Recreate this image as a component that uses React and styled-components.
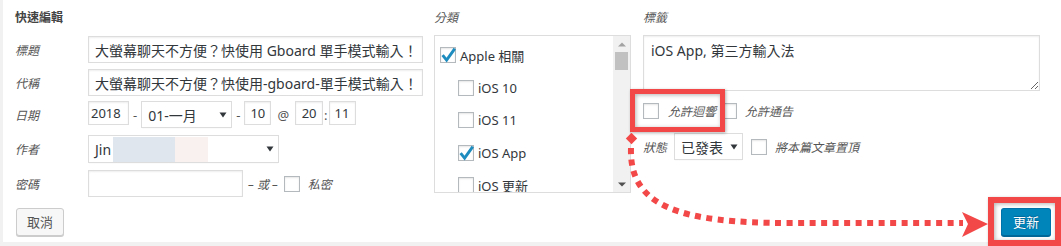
import React from "react";
import styled, { createGlobalStyle } from "styled-components";

const GlobalStyle = createGlobalStyle`
  html, body {
    margin: 0;
    padding: 0;
    background: #f1f1f1;
  }
  body {
    font-family: "Noto Sans", "Noto Sans CJK TC", sans-serif;
    color: #32373c;
  }
`;

const RED = "#f34848";

const Stage = styled.div`
  position: relative;
  width: 1061px;
  height: 246px;
  overflow: hidden;
  background: #f1f1f1;
`;

const Panel = styled.div`
  margin-left: 3px;
  width: 1058px;
  height: 242px;
  box-sizing: border-box;
  background: #fff;
  padding: 10px 10px 0 12px;
  display: flex;
  flex-direction: column;
`;

const Columns = styled.div`
  display: flex;
  align-items: flex-start;
`;

const Column = styled.div`
  width: ${({ $w }) => $w}px;
  margin-left: ${({ $ml = 0 }) => $ml}px;
  display: flex;
  flex-direction: column;
  flex-shrink: 0;
`;

const Heading = styled.div`
  font-size: 12px;
  line-height: 16px;
  height: 16px;
  margin-bottom: 9px;
  font-weight: ${({ $bold }) => ($bold ? 700 : 400)};
  font-style: ${({ $bold }) => ($bold ? "normal" : "italic")};
  color: ${({ $bold }) => ($bold ? "#444" : "#555")};
`;

const FieldRow = styled.div`
  display: flex;
  align-items: ${({ $align = "center" }) => $align};
  height: ${({ $h = 27 }) => $h}px;
  margin-top: ${({ $mt = 0 }) => $mt}px;
`;

const FieldLabel = styled.span`
  width: 73px;
  flex-shrink: 0;
  font-size: 12px;
  font-style: italic;
  color: #555;
  align-self: center;
`;

const TextInput = styled.input`
  box-sizing: border-box;
  width: ${({ $w }) => $w}px;
  height: ${({ $h = 27 }) => $h}px;
  margin: 0;
  padding: 0 ${({ $pad = 6 }) => $pad}px;
  border: 1px solid #ddd;
  border-radius: 0;
  box-shadow: inset 0 1px 2px rgba(0, 0, 0, 0.07);
  background: #fff;
  font-family: inherit;
  font-size: ${({ $fs = 14 }) => $fs}px;
  color: #32373c;
  text-align: ${({ $center }) => ($center ? "center" : "left")};
  outline: none;
`;

const SelectBox = styled.div`
  box-sizing: border-box;
  width: ${({ $w }) => $w}px;
  height: ${({ $h = 27 }) => $h}px;
  padding: 0 4px 0 6px;
  border: 1px solid #ddd;
  box-shadow: 0 1px 1px -1px rgba(0, 0, 0, 0.1);
  background: #fff;
  display: flex;
  align-items: center;
  font-size: 14px;
  color: #32373c;
  flex-shrink: 0;
`;

const SelectText = styled.span`
  flex: 1;
  white-space: nowrap;
  display: flex;
  align-items: center;
  height: 100%;
`;

const Redact = styled.span`
  align-self: flex-end;
  height: 25px;
  width: ${({ $w }) => $w}px;
  background: ${({ $c }) => $c};
  margin-left: ${({ $ml = 0 }) => $ml}px;
`;

const Sep = styled.span`
  font-size: 13px;
  color: #555;
  margin: 0 ${({ $m = 4 }) => $m}px;
  align-self: center;
`;

const Italic = styled.span`
  font-size: 12px;
  font-style: italic;
  color: #555;
  white-space: nowrap;
  margin-left: ${({ $ml = 0 }) => $ml}px;
`;

const Box = styled.span`
  position: relative;
  display: inline-block;
  box-sizing: border-box;
  width: 16px;
  height: 16px;
  flex-shrink: 0;
  border: 1px solid #b4b9be;
  background: #fff;
  box-shadow: inset 0 1px 2px rgba(0, 0, 0, 0.1);
  margin-left: ${({ $ml = 0 }) => $ml}px;
`;

const CheckMark = styled.svg`
  position: absolute;
  left: -1px;
  top: -1px;
  width: 16px;
  height: 16px;
  overflow: visible;
`;

const Checkbox = ({ checked, ml }) => (
  <Box $ml={ml}>
    {checked && (
      <CheckMark viewBox="0 0 16 16">
        <path
          d="M2.6 8.2 L6.6 13.2 L14.8 1.6"
          fill="none"
          stroke="#1e8cbe"
          strokeWidth="2.9"
        />
      </CheckMark>
    )}
  </Box>
);

const Arrow = ({ color = "#32373c" }) => (
  <svg width="8" height="6" viewBox="0 0 8 6">
    <path d="M0.5 0.5 H7.5 L4 5.5 Z" fill={color} />
  </svg>
);

/* category checklist */
const CatBox = styled.div`
  box-sizing: border-box;
  width: 197px;
  height: 158px;
  border: 1px solid #ddd;
  display: flex;
  overflow: hidden;
`;

const CatList = styled.div`
  flex: 1;
  padding: 11px 0 0 5px;
  display: flex;
  flex-direction: column;
  gap: 16.5px;
  overflow: hidden;
`;

const CatItem = styled.div`
  display: flex;
  align-items: center;
  gap: 4px;
  height: 16px;
  flex-shrink: 0;
  padding-left: ${({ $indent }) => ($indent ? 18 : 0)}px;
  font-size: 13px;
  color: #32373c;
  white-space: nowrap;
`;

const Scrollbar = styled.div`
  width: 17px;
  background: #f1f1f1;
  display: flex;
  flex-direction: column;
  align-items: center;
`;

const ScrollBtn = styled.div`
  height: 16px;
  display: flex;
  align-items: center;
  justify-content: center;
`;

const Thumb = styled.div`
  width: 13px;
  height: 18px;
  background: #c1c1c1;
`;

const Spacer = styled.div`
  flex: 1;
`;

const TagArea = styled.textarea`
  box-sizing: border-box;
  width: 397px;
  height: 56px;
  margin: 0;
  padding: 5px 7px;
  border: 1px solid #ddd;
  box-shadow: inset 0 1px 2px rgba(0, 0, 0, 0.07);
  font-family: inherit;
  font-size: 14px;
  line-height: 20px;
  color: #32373c;
  outline: none;
`;

const CheckRow = styled.div`
  display: flex;
  align-items: center;
  height: ${({ $h = 16 }) => $h}px;
  margin-top: ${({ $mt = 0 }) => $mt}px;
`;

const ButtonRow = styled.div`
  display: flex;
  justify-content: space-between;
  margin-top: 11px;
  padding-left: 1px;
`;

const Button = styled.button`
  box-sizing: border-box;
  height: 28px;
  margin: 0;
  padding: 0 ${({ $primary }) => ($primary ? 11 : 10)}px;
  border-radius: 3px;
  font-family: inherit;
  font-size: 13px;
  line-height: 26px;
  cursor: pointer;
  border: 1px solid ${({ $primary }) => ($primary ? "#0073aa" : "#ccc")};
  border-bottom-color: ${({ $primary }) => ($primary ? "#006799" : "#ccc")};
  background: ${({ $primary }) => ($primary ? "#0085ba" : "#f7f7f7")};
  color: ${({ $primary }) => ($primary ? "#fff" : "#555")};
  box-shadow: 0 1px 0 ${({ $primary }) => ($primary ? "#006799" : "#ccc")};
  text-shadow: ${({ $primary }) =>
    $primary ? "0 -1px 1px #006799, 1px 0 1px #006799" : "none"};
`;

/* annotation overlay */
const Frame = styled.div`
  position: absolute;
  box-sizing: border-box;
  left: ${({ $x }) => $x}px;
  top: ${({ $y }) => $y}px;
  width: ${({ $w }) => $w}px;
  height: ${({ $h }) => $h}px;
  border: ${({ $t }) => $t}px solid ${RED};
  box-shadow: 1px 1px 3px rgba(0, 0, 0, 0.3),
    inset 1px 1px 4px rgba(0, 0, 0, 0.3);
  pointer-events: none;
`;

const Overlay = styled.svg`
  position: absolute;
  left: 0;
  top: 0;
  pointer-events: none;
`;

const categories = [
  { name: "Apple 相關", checked: true },
  { name: "iOS 10", child: true },
  { name: "iOS 11", child: true },
  { name: "iOS App", child: true, checked: true },
  { name: "iOS 更新", child: true },
];

export default function App() {
  return (
    <Stage>
      <GlobalStyle />
      <Panel>
        <Columns>
          <Column $w={408}>
            <Heading $bold>快速編輯</Heading>
            <FieldRow $mt={1}>
              <FieldLabel>標題</FieldLabel>
              <TextInput
                $w={335}
                defaultValue="大螢幕聊天不方便？快使用 Gboard 單手模式輸入！"
              />
            </FieldRow>
            <FieldRow $mt={6}>
              <FieldLabel>代稱</FieldLabel>
              <TextInput
                $w={335}
                defaultValue="大螢幕聊天不方便？快使用-gboard-單手模式輸入！"
              />
            </FieldRow>
            <FieldRow $mt={5} $align="flex-start">
              <FieldLabel>日期</FieldLabel>
              <TextInput $w={41} $h={24} $fs={13} $pad={2} defaultValue="2018" />
              <Sep>-</Sep>
              <SelectBox $w={91}>
                <SelectText>01-一月</SelectText>
                <Arrow />
              </SelectBox>
              <Sep>-</Sep>
              <TextInput $w={27} $h={24} $fs={13} $pad={0} $center defaultValue="10" />
              <Sep $m={6}>@</Sep>
              <TextInput $w={28} $h={24} $fs={13} $pad={0} $center defaultValue="20" />
              <Sep $m={1}>:</Sep>
              <TextInput $w={27} $h={24} $fs={13} $pad={0} $center defaultValue="11" />
            </FieldRow>
            <FieldRow $mt={7} $h={28}>
              <FieldLabel>作者</FieldLabel>
              <SelectBox $w={191} $h={28}>
                <SelectText>
                  Jin
                  <Redact $w={62} $c="#dfe6ed" $ml={2} />
                  <Redact $w={33} $c="#f8f1f0" />
                </SelectText>
                <Arrow />
              </SelectBox>
            </FieldRow>
            <FieldRow $mt={7}>
              <FieldLabel>密碼</FieldLabel>
              <TextInput $w={155} />
              <Italic $ml={5}>– 或 –</Italic>
              <Checkbox ml={6} />
              <Italic $ml={8}>私密</Italic>
            </FieldRow>
          </Column>

          <Column $w={197} $ml={11}>
            <Heading>分類</Heading>
            <CatBox>
              <CatList>
                {categories.map((c) => (
                  <CatItem key={c.name} $indent={c.child}>
                    <Checkbox checked={c.checked} />
                    {c.name}
                  </CatItem>
                ))}
              </CatList>
              <Scrollbar>
                <ScrollBtn>
                  <svg width="8" height="5" viewBox="0 0 8 5">
                    <path d="M0 4.5 H8 L4 0.5 Z" fill="#a3a3a3" />
                  </svg>
                </ScrollBtn>
                <Thumb />
                <Spacer />
                <ScrollBtn>
                  <svg width="8" height="5" viewBox="0 0 8 5">
                    <path d="M0 0.5 H8 L4 4.5 Z" fill="#505050" />
                  </svg>
                </ScrollBtn>
              </Scrollbar>
            </CatBox>
          </Column>

          <Column $w={397} $ml={12}>
            <Heading>標籤</Heading>
            <TagArea defaultValue="iOS App, 第三方輸入法" />
            <CheckRow $mt={12}>
              <Checkbox />
              <Italic $ml={9}>允許迴響</Italic>
              <Checkbox ml={5} />
              <Italic $ml={8}>允許通告</Italic>
            </CheckRow>
            <CheckRow $mt={14} $h={27}>
              <Italic>狀態</Italic>
              <SelectBox $w={69} style={{ marginLeft: 7 }}>
                <SelectText>已發表</SelectText>
                <Arrow />
              </SelectBox>
              <Checkbox ml={8} />
              <Italic $ml={8}>將本篇文章置頂</Italic>
            </CheckRow>
          </Column>
        </Columns>

        <ButtonRow>
          <Button>取消</Button>
          <Button $primary>更新</Button>
        </ButtonRow>
      </Panel>

      <Frame $x={630} $y={89} $w={95} $h={43} $t={5} />
      <Frame $x={988} $y={197} $w={73} $h={49} $t={6} />
      <Overlay width="1061" height="246" viewBox="0 0 1061 246">
        <rect
          x="627.5"
          y="134.5"
          width="8"
          height="8"
          fill={RED}
          transform="rotate(45 631.5 138.5)"
        />
        <path
          d="M631,148 C629,207 680,223 790,223 L963,223"
          fill="none"
          stroke={RED}
          strokeWidth="6"
          strokeDasharray="6 5.5"
        />
        <polygon points="962,212 988,224 962,237 968,224" fill={RED} />
      </Overlay>
    </Stage>
  );
}
